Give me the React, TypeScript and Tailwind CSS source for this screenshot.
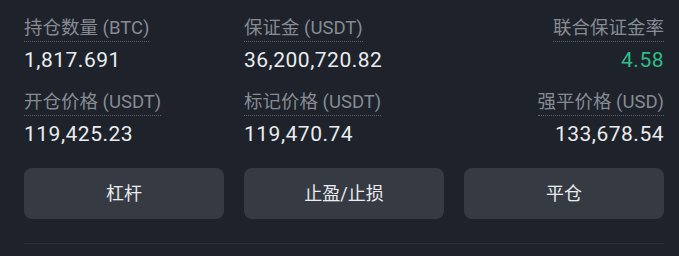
const stats = [
  { label: '持仓数量 (BTC)', value: '1,817.691' },
  { label: '保证金 (USDT)', value: '36,200,720.82' },
  { label: '联合保证金率', value: '4.58', green: true },
  { label: '开仓价格 (USDT)', value: '119,425.23' },
  { label: '标记价格 (USDT)', value: '119,470.74' },
  { label: '强平价格 (USD)', value: '133,678.54' },
]

const actions = ['杠杆', '止盈/止损', '平仓']

const Stat = ({ label, value, green, right }: { label: string; value: string; green?: boolean; right?: boolean }) => (
  <div className={`flex flex-col ${right ? 'items-end' : 'items-start'}`}>
    <span className="text-[18.5px] leading-[24px] text-[#868b94] border-b border-dotted border-[#5b606a] pb-[1px]">
      {label}
    </span>
    <span className={`mt-[4px] text-[21px] leading-[28px] tracking-[0.5px] ${green ? 'text-[#2ebd85]' : 'text-[#eaecef]'}`}>
      {value}
    </span>
  </div>
)

export default function App() {
  return (
    <div
      className="w-[679px] h-[256px] bg-[#1e222a] pl-6 pr-[15px] pt-[16px] overflow-hidden"
      style={{ fontFamily: 'Roboto, "Noto Sans CJK SC", sans-serif' }}
    >
      <div className="grid grid-cols-3 gap-x-5 gap-y-[16px]">
        {stats.map((s, i) => (
          <Stat key={i} {...s} right={i % 3 === 2} />
        ))}
      </div>
      <div className="grid grid-cols-3 gap-5 mt-[20px]">
        {actions.map((a) => (
          <button
            key={a}
            className="h-[51px] rounded-lg bg-[#353a43] text-[18px] font-normal text-[#eaecef]"
          >
            {a}
          </button>
        ))}
      </div>
      <div className="mt-[24px] border-t border-[#2b3039]" />
    </div>
  )
}
